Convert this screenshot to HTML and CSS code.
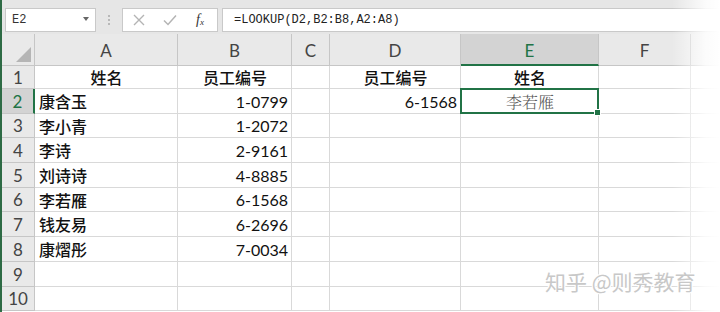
FILE: index.html
```html
<!DOCTYPE html>
<html lang="zh-CN">
<head>
<meta charset="utf-8">
<title>LOOKUP</title>
<link rel="stylesheet" href="styles.css">
</head>
<body>
<div class="app">
  <div class="toolbar">
    <div class="namebox"><span class="nb-text">E2</span><span class="nb-arrow"></span></div>
    <div class="grip"><i></i><i></i><i></i></div>
    <div class="fxbox">
      <svg class="ic" width="14" height="14" viewBox="0 0 14 14"><path d="M2 2 L12 12 M12 2 L2 12" stroke="#b4b4b4" stroke-width="1.4" fill="none"/></svg>
      <svg class="ic" width="16" height="14" viewBox="0 0 16 14"><path d="M2 7.5 L6 11.5 L14 2.5" stroke="#b4b4b4" stroke-width="1.5" fill="none"/></svg>
      <span class="fx">f<sub>x</sub></span>
    </div>
    <div class="formula">=LOOKUP(D2,B2:B8,A2:A8)</div>
  </div>
  <div class="sheet">
    <div class="hd corner"><span class="tri"></span></div>
    <div class="hd col">A</div>
    <div class="hd col">B</div>
    <div class="hd col">C</div>
    <div class="hd col">D</div>
    <div class="hd col sel">E</div>
    <div class="hd col">F</div>
    <div class="hd col last"></div>

    <div class="hd row">1</div>
    <div class="c ctr">姓名</div><div class="c ctr">员工编号</div><div class="c"></div><div class="c ctr">员工编号</div><div class="c ctr">姓名</div><div class="c"></div><div class="c last"></div>

    <div class="hd row rsel">2</div>
    <div class="c">康含玉</div><div class="c num">1-0799</div><div class="c"></div><div class="c num">6-1568</div><div class="c ctr active">李若雁</div><div class="c"></div><div class="c last"></div>

    <div class="hd row">3</div>
    <div class="c">李小青</div><div class="c num">1-2072</div><div class="c"></div><div class="c"></div><div class="c"></div><div class="c"></div><div class="c last"></div>

    <div class="hd row">4</div>
    <div class="c">李诗</div><div class="c num">2-9161</div><div class="c"></div><div class="c"></div><div class="c"></div><div class="c"></div><div class="c last"></div>

    <div class="hd row">5</div>
    <div class="c">刘诗诗</div><div class="c num">4-8885</div><div class="c"></div><div class="c"></div><div class="c"></div><div class="c"></div><div class="c last"></div>

    <div class="hd row">6</div>
    <div class="c">李若雁</div><div class="c num">6-1568</div><div class="c"></div><div class="c"></div><div class="c"></div><div class="c"></div><div class="c last"></div>

    <div class="hd row">7</div>
    <div class="c">钱友易</div><div class="c num">6-2696</div><div class="c"></div><div class="c"></div><div class="c"></div><div class="c"></div><div class="c last"></div>

    <div class="hd row">8</div>
    <div class="c">康熠彤</div><div class="c num">7-0034</div><div class="c"></div><div class="c"></div><div class="c"></div><div class="c"></div><div class="c last"></div>

    <div class="hd row">9</div>
    <div class="c"></div><div class="c"></div><div class="c"></div><div class="c"></div><div class="c"></div><div class="c"></div><div class="c last"></div>

    <div class="hd row">10</div>
    <div class="c"></div><div class="c"></div><div class="c"></div><div class="c"></div><div class="c"></div><div class="c"></div><div class="c last"></div>
  </div>
  <div class="fade"></div>
  <div class="watermark">知乎 @则秀教育</div>
</div>
</body>
</html>
```

FILE: styles.css
```css
* { box-sizing: border-box; }
html, body { margin: 0; padding: 0; background: #fff; }
body { width: 720px; height: 312px; overflow: hidden; font-family: "Noto Sans CJK SC", sans-serif; }

.app {
  position: relative;
  width: 720px;
  height: 312px;
  overflow: hidden;
  border-left: 2px solid #2e6b45;
  background: #fff;
}

.toolbar {
  height: 34px;
  background: #e6e6e6;
  display: flex;
  align-items: flex-start;
  padding: 8px 0 0 3px;
}
.namebox {
  width: 91px;
  height: 24px;
  background: #fff;
  border: 1px solid #c9c9c9;
  display: flex;
  align-items: center;
  justify-content: space-between;
  padding: 0 6px 0 6px;
}
.nb-text { font-family: "Liberation Mono", monospace; font-size: 12px; color: #333; letter-spacing: 0; }
.nb-arrow {
  width: 0; height: 0;
  border-left: 3.5px solid transparent;
  border-right: 3.5px solid transparent;
  border-top: 4px solid #666;
  margin-top: -2px;
}
.grip {
  width: 26px;
  height: 24px;
  display: flex;
  flex-direction: column;
  align-items: center;
  justify-content: center;
  gap: 2px;
}
.grip i { display: block; width: 2px; height: 2px; background: #b8b8b8; }
.fxbox {
  width: 96px;
  height: 24px;
  background: #fff;
  border: 1px solid #c9c9c9;
  display: flex;
  align-items: center;
  padding: 0 0 0 9px;
  gap: 16px;
}
.ic { display: block; }
.fx {
  font-family: "Liberation Serif", serif;
  font-style: italic;
  font-size: 14px;
  color: #333;
  margin-left: 2px;
}
.fx sub { font-size: 9px; vertical-align: -1px; }
.formula {
  margin-left: 4px;
  flex: 1;
  height: 24px;
  background: #fff;
  border: 1px solid #c9c9c9;
  border-right: none;
  font-family: "Liberation Mono", monospace;
  font-size: 12px;
  color: #222;
  line-height: 22px;
  padding-left: 11px;
}

.sheet {
  display: grid;
  grid-template-columns: 33px 143px 114px 38px 131px 138px 92px 1fr;
  grid-template-rows: 32px 23px 25px 24px 25px 25px 24px 25px 25px 25px 24px;
}
.hd {
  background: #e9e9e9;
  border-right: 1px solid #c6c6c6;
  border-bottom: 1px solid #c6c6c6;
  color: #444;
  font-family: "Lato", "Liberation Sans", sans-serif;
  font-size: 17px;
  display: flex;
  align-items: center;
  justify-content: center;
}
.hd.col { padding-top: 2px; }
.hd.last { border-right: none; }
.hd.sel {
  background: #d3d3d3;
  border-bottom: 2px solid #217346;
  color: #217346;
}
.hd.rsel {
  background: #d3d3d3;
  border-right: 2px solid #217346;
  color: #217346;
}
.corner { position: relative; }
.tri {
  position: absolute;
  right: 3px;
  bottom: 3px;
  width: 0; height: 0;
  border-left: 15px solid transparent;
  border-bottom: 15px solid #b5b5b5;
}

.c {
  border-right: 1px solid #d9d9d9;
  border-bottom: 1px solid #d9d9d9;
  font-family: "Noto Sans CJK SC", sans-serif;
  font-weight: 500;
  font-size: 16px;
  color: #111;
  display: flex;
  align-items: center;
  padding: 0 3px 0 4px;
  white-space: nowrap;
}
.c.last { border-right: none; }
.c.ctr { justify-content: center; }
.c.num {
  justify-content: flex-end;
  font-family: "Lato", "Liberation Sans", sans-serif;
  font-weight: 400;
  font-size: 16px;
  padding-right: 3px;
}
.c.active {
  position: relative;
  font-family: "Noto Serif CJK SC", "Noto Sans CJK SC", serif;
  font-weight: 300;
  color: #555;
}
.c.active::after {
  content: "";
  position: absolute;
  left: -1px; top: -1px; right: -1px; bottom: -1px;
  border: 2px solid #217346;
}
.c.active::before {
  content: "";
  position: absolute;
  right: -3px; bottom: -3px;
  width: 5px; height: 5px;
  background: #217346;
  border: 1px solid #fff;
  z-index: 2;
}

.fade {
  position: absolute;
  top: 0; right: 0;
  width: 48px;
  height: 312px;
  background: linear-gradient(to right, rgba(255,255,255,0), rgba(255,255,255,0.85) 70%, #fff);
  pointer-events: none;
}
.watermark {
  position: absolute;
  left: 543px;
  top: 266px;
  font-family: "Noto Sans CJK SC", sans-serif;
  font-size: 21px;
  color: #c8c8c8;
  letter-spacing: 0;
  text-shadow: 0 0 1px #fff, 1px 1px 0 #fff, -1px -1px 0 #fff, 1px -1px 0 #fff, -1px 1px 0 #fff;
  white-space: nowrap;
}
```
